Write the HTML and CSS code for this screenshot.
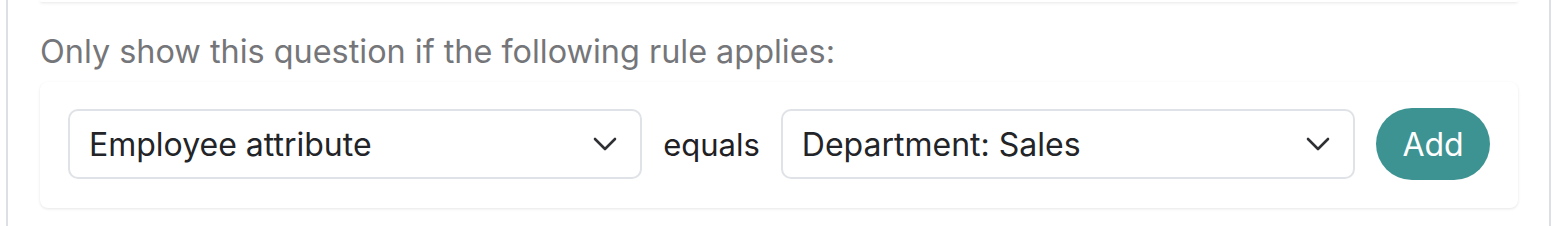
FILE: index.html
```html
<!DOCTYPE html>
<html lang="en">
<head>
    <meta charset="UTF-8">
    <title>Question rule</title>
    <link rel="stylesheet" href="styles.css">
</head>
<body>

<div class="panel">
    <div class="prev-card"></div>

    <p class="rule-label">Only show this question if the following rule applies:</p>

    <div class="rule-card">
        <div class="select-box">
            <span>Employee attribute</span>
            <svg class="chevron" viewBox="0 0 24 14" width="24" height="14"><path d="M2 2l10 10 10-10" fill="none" stroke="#2e3033" stroke-width="2.6" stroke-linecap="round" stroke-linejoin="round"/></svg>
        </div>
        <span class="operator">equals</span>
        <div class="select-box">
            <span>Department: Sales</span>
            <svg class="chevron" viewBox="0 0 24 14" width="24" height="14"><path d="M2 2l10 10 10-10" fill="none" stroke="#2e3033" stroke-width="2.6" stroke-linecap="round" stroke-linejoin="round"/></svg>
        </div>
        <button class="add-btn">Add</button>
    </div>
</div>

</body>
</html>
```

FILE: styles.css
```css
body {
    margin: 0;
    background-color: #fff;
    font-family: Inter, "Noto Sans", sans-serif;
    overflow: hidden;
}

.panel {
    margin-left: 6px;
    width: 1545px;
    height: 226px;
    border-left: 2px solid #dcdfe3;
    border-right: 2px solid #dcdfe3;
    padding: 0 31px 0 32px;
    box-sizing: border-box;
}

.prev-card {
    height: 2px;
    border-radius: 0 0 8px 8px;
    background-color: #fff;
    box-shadow: 0 1px 3px rgba(0, 0, 0, 0.12);
}

.rule-label {
    margin: 0 0 10px;
    padding-top: 30px;
    font-size: 32.4px;
    line-height: 40px;
    color: #757679;
}

.rule-card {
    display: flex;
    align-items: center;
    gap: 21px;
    padding: 26px 28px 28px;
    border-radius: 8px;
    background-color: #fff;
    box-shadow: 0 1px 3px rgba(0, 0, 0, 0.1);
}

.select-box {
    flex: 1;
    height: 70px;
    box-sizing: border-box;
    display: flex;
    align-items: center;
    justify-content: space-between;
    padding: 0 23px 0 19px;
    border: 2px solid #dfe2e6;
    border-radius: 10px;
    font-size: 32px;
    color: #222427;
}

.chevron {
    flex-shrink: 0;
}

.operator {
    font-size: 31px;
    color: #1f2023;
}

.add-btn {
    width: 114px;
    height: 72px;
    border: none;
    border-radius: 36px;
    background-color: #3d9392;
    color: #fff;
    font-family: inherit;
    font-size: 32px;
}
```
